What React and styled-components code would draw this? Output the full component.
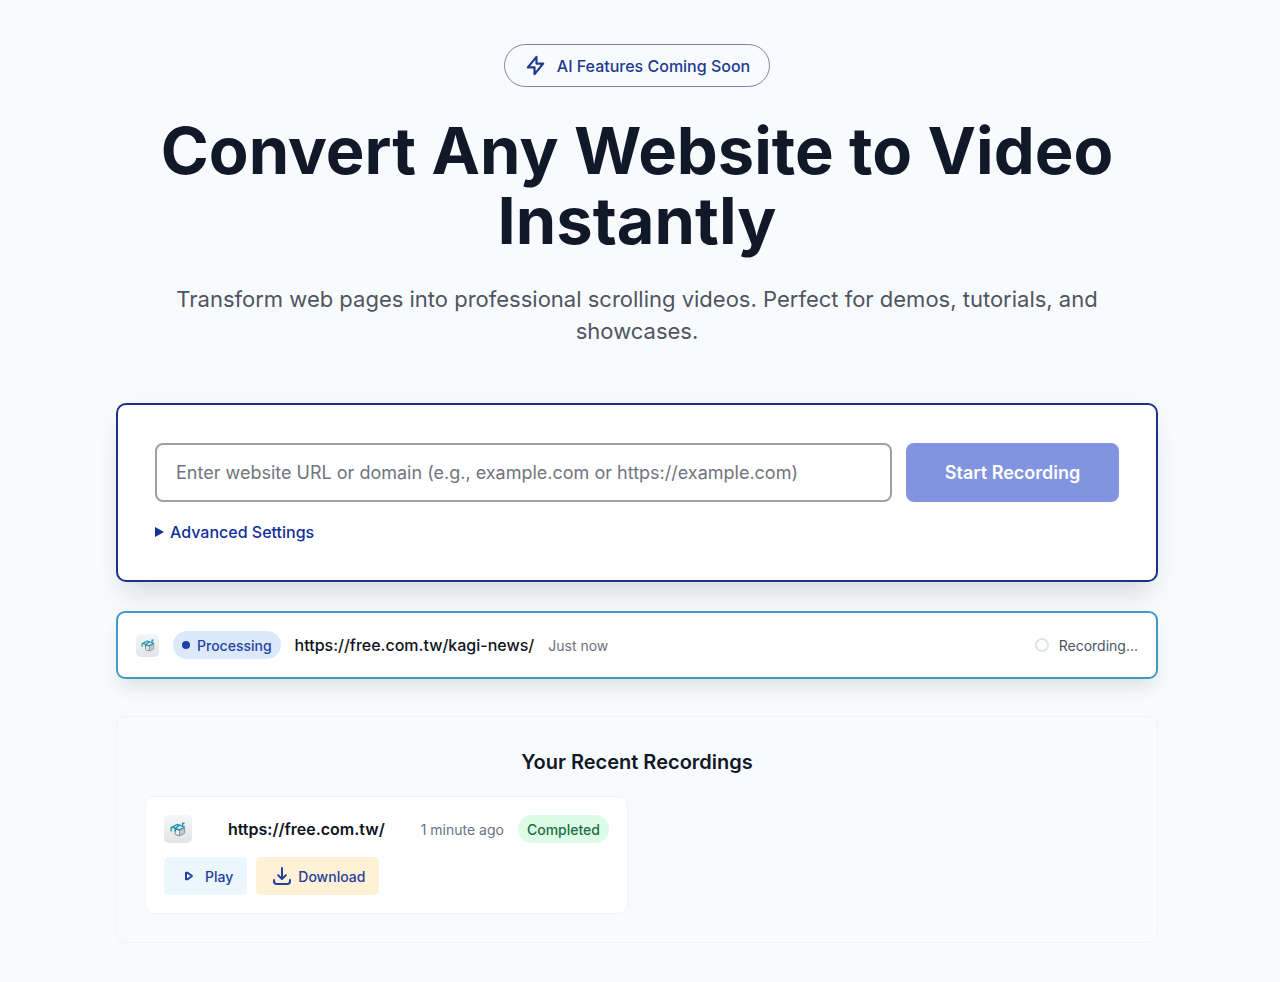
import React from "react";
import styled, { createGlobalStyle } from "styled-components";

const GlobalStyle = createGlobalStyle`
  *, *::before, *::after { box-sizing: border-box; }
  body {
    margin: 0;
    background: #f8fbfe;
    color: #111827;
    font-family: Inter, "Liberation Sans", sans-serif;
  }
  h1, h2, p { margin: 0; }
  button, input { font-family: inherit; margin: 0; }
`;

const Page = styled.main`
  max-width: 1048px;
  margin: 0 auto;
  padding: 44px 6px 39px 0;
  display: flex;
  flex-direction: column;
`;

const Hero = styled.header`
  display: flex;
  flex-direction: column;
  align-items: center;
  text-align: center;
  margin-bottom: 56px;
`;

const Announcement = styled.div`
  display: flex;
  align-items: center;
  gap: 10px;
  height: 43px;
  padding: 0 19px;
  border: 1px solid #7d83ab;
  border-radius: 22px;
  color: #1e3a8f;
  font-size: 16px;
  font-weight: 500;
  line-height: 24px;
`;

const Headline = styled.h1`
  max-width: 1000px;
  margin-top: 29px;
  font-size: 65px;
  font-weight: 700;
  line-height: 70px;
`;

const Lead = styled.p`
  max-width: 960px;
  margin-top: 27px;
  color: #4f555e;
  font-size: 22px;
  line-height: 32px;
`;

const FormCard = styled.form`
  padding: 38px 37px 36px;
  border: 2px solid #1b3384;
  border-radius: 10px;
  background: #fff;
  box-shadow: 0 22px 28px -8px rgba(0, 0, 0, 0.1), 0 4px 24px rgba(0, 0, 0, 0.03);
`;

const FormRow = styled.div`
  display: flex;
  gap: 14px;
`;

const UrlInput = styled.input`
  flex: 1;
  min-width: 0;
  height: 59px;
  padding: 0 19px;
  border: 2px solid #a0a0a0;
  border-radius: 8px;
  background: #fff;
  color: #111827;
  font-size: 18px;
  &::placeholder { color: #70757f; opacity: 1; }
`;

const SubmitButton = styled.button`
  width: 213px;
  height: 59px;
  border: 0;
  border-radius: 8px;
  background: #8294e0;
  color: #fff;
  font-size: 18px;
  font-weight: 600;
`;

const Advanced = styled.details`
  margin-top: 18px;
  color: #12309a;
  font-size: 16px;
  font-weight: 500;
  line-height: 24px;
`;

const AdvancedSummary = styled.summary`
  display: flex;
  align-items: center;
  gap: 6px;
  width: fit-content;
  list-style: none;
  cursor: pointer;
  &::-webkit-details-marker { display: none; }
  &::before {
    content: "";
    border-left: 9px solid currentColor;
    border-top: 5px solid transparent;
    border-bottom: 5px solid transparent;
  }
`;

const ProgressCard = styled.section`
  display: flex;
  align-items: center;
  gap: 14px;
  height: 68px;
  margin-top: 29px;
  padding: 0 18px;
  border: 2px solid #4199c4;
  border-radius: 9px;
  background: #fff;
  box-shadow: 0 12px 18px -4px rgba(0, 0, 0, 0.1);
`;

const SiteIcon = styled.span`
  display: grid;
  place-items: center;
  flex: none;
  width: ${(p) => p.$size}px;
  height: ${(p) => p.$size}px;
  border-radius: 5px;
  background: linear-gradient(#f5f6f7, #e2e4e6);
`;

const StatusBadge = styled.span`
  display: inline-flex;
  align-items: center;
  gap: 7px;
  height: 28px;
  padding: 0 9px;
  border-radius: 14px;
  background: ${(p) => (p.$done ? "#dcfce7" : "#dce8fb")};
  color: ${(p) => (p.$done ? "#1f6b42" : "#2544a4")};
  font-size: 14px;
  font-weight: 500;
  white-space: nowrap;
`;

const Dot = styled.i`
  width: 8px;
  height: 8px;
  border-radius: 50%;
  background: #1e40af;
`;

const SiteLink = styled.a`
  color: #0f1420;
  font-size: 16px;
  font-weight: ${(p) => (p.$strong ? 600 : 500)};
  text-decoration: none;
`;

const Time = styled.time`
  color: #6b7280;
  font-size: 14px;
  white-space: nowrap;
`;

const Recording = styled.span`
  display: flex;
  align-items: center;
  gap: 10px;
  margin-left: auto;
  color: #4b5563;
  font-size: 14px;
`;

const Spinner = styled.i`
  width: 14px;
  height: 14px;
  border: 2px solid #dbe4ef;
  border-radius: 50%;
`;

const Recent = styled.section`
  margin-top: 37px;
  padding: 29px 28px 28px;
  border: 1px solid #f0f4f7;
  border-radius: 9px;
`;

const RecentTitle = styled.h2`
  font-size: 20px;
  font-weight: 600;
  line-height: 32px;
  text-align: center;
`;

const RecordingGrid = styled.div`
  display: grid;
  grid-template-columns: repeat(2, 1fr);
  gap: 18px;
  margin-top: 18px;
`;

const RecordingCard = styled.article`
  display: flex;
  flex-direction: column;
  gap: 14px;
  padding: 18px;
  border: 1px solid #eef3f7;
  border-radius: 9px;
  background: #fff;
`;

const RecordingMeta = styled.div`
  display: flex;
  align-items: center;
  gap: 14px;
`;

const LinkCell = styled.div`
  flex: 1;
  text-align: center;
`;

const Actions = styled.div`
  display: flex;
  gap: 9px;
`;

const ActionButton = styled.button`
  display: flex;
  align-items: center;
  gap: ${(p) => (p.$warm ? 7 : 11)}px;
  height: 38px;
  padding: ${(p) => (p.$warm ? "0 14px 0 17px" : "0 14px 0 20px")};
  border: 0;
  border-radius: 5px;
  background: ${(p) => (p.$warm ? "#fef1d5" : "#ebf6fd")};
  color: #23409c;
  font-size: 14px;
  font-weight: 500;
  cursor: pointer;
`;

function BoltIcon() {
  return (
    <svg width="23" height="23" viewBox="0 0 24 24" fill="none" stroke="currentColor" strokeWidth="2.3" strokeLinecap="round" strokeLinejoin="round" aria-hidden="true">
      <path d="M13 10V3L4 14h7v7l9-11h-7z" />
    </svg>
  );
}

function CubeIcon({ size }) {
  return (
    <svg width={size} height={size} viewBox="0 0 16 16" fill="none" aria-hidden="true">
      <path d="M5.2 8.2 9.6 9.2v5.6L6 13.8q-.8-.3-.8-1.2z" fill="#eceeef" stroke="#71868f" strokeWidth="1" strokeLinejoin="round" />
      <path d="m9.6 9.2 5-2.2v4.8q0 .7-.7 1l-4.3 2z" fill="#c5c9cb" stroke="#8d979b" strokeWidth="1" strokeLinejoin="round" />
      <path d="M5.2 7.4 9.6 4.2l5 1.8-5 2.8z" fill="#d5edf3" stroke="#2391b0" strokeWidth="1.3" strokeLinejoin="round" />
      <path d="M1.2 10.4V6.6L7 3.5l2.6.7M1.2 6.6l2.6-.2 1.4 1v3M12.6 5V1.6M12.6 3l2-1" stroke="#2391b0" strokeWidth="1.3" strokeLinejoin="round" />
    </svg>
  );
}

function PlayIcon() {
  return (
    <svg width="10" height="10" viewBox="0 0 10 10" fill="none" stroke="currentColor" strokeWidth="2" strokeLinejoin="round" aria-hidden="true">
      <path d="M2 1.8h1.6L8 5 3.6 8.2H2z" />
    </svg>
  );
}

function DownloadIcon() {
  return (
    <svg width="18" height="18" viewBox="0 0 18 18" fill="none" stroke="currentColor" strokeWidth="2" strokeLinecap="round" strokeLinejoin="round" aria-hidden="true">
      <path d="M9 1v11M5.2 8.3 9 12l3.8-3.7M1 13v1.2A2.8 2.8 0 0 0 3.8 17h10.4a2.8 2.8 0 0 0 2.8-2.8V13" />
    </svg>
  );
}

export default function App() {
  return (
    <>
      <GlobalStyle />
      <Page>
        <Hero>
          <Announcement>
            <BoltIcon />
            <span>AI Features Coming Soon</span>
          </Announcement>
          <Headline>Convert Any Website to Video Instantly</Headline>
          <Lead>
            Transform web pages into professional scrolling videos. Perfect for demos, tutorials, and showcases.
          </Lead>
        </Hero>

        <FormCard>
          <FormRow>
            <UrlInput
              type="text"
              aria-label="Website URL"
              placeholder="Enter website URL or domain (e.g., example.com or https://example.com)"
            />
            <SubmitButton type="submit" disabled>Start Recording</SubmitButton>
          </FormRow>
          <Advanced>
            <AdvancedSummary>Advanced Settings</AdvancedSummary>
          </Advanced>
        </FormCard>

        <ProgressCard>
          <SiteIcon $size={23}><CubeIcon size={14} /></SiteIcon>
          <StatusBadge><Dot />Processing</StatusBadge>
          <SiteLink href="https://free.com.tw/kagi-news/">https://free.com.tw/kagi-news/</SiteLink>
          <Time>Just now</Time>
          <Recording><Spinner />Recording...</Recording>
        </ProgressCard>

        <Recent>
          <RecentTitle>Your Recent Recordings</RecentTitle>
          <RecordingGrid>
            <RecordingCard>
              <RecordingMeta>
                <SiteIcon $size={28}><CubeIcon size={16} /></SiteIcon>
                <LinkCell>
                  <SiteLink $strong href="https://free.com.tw/">https://free.com.tw/</SiteLink>
                </LinkCell>
                <Time>1 minute ago</Time>
                <StatusBadge $done>Completed</StatusBadge>
              </RecordingMeta>
              <Actions>
                <ActionButton type="button"><PlayIcon />Play</ActionButton>
                <ActionButton type="button" $warm><DownloadIcon />Download</ActionButton>
              </Actions>
            </RecordingCard>
          </RecordingGrid>
        </Recent>
      </Page>
    </>
  );
}
